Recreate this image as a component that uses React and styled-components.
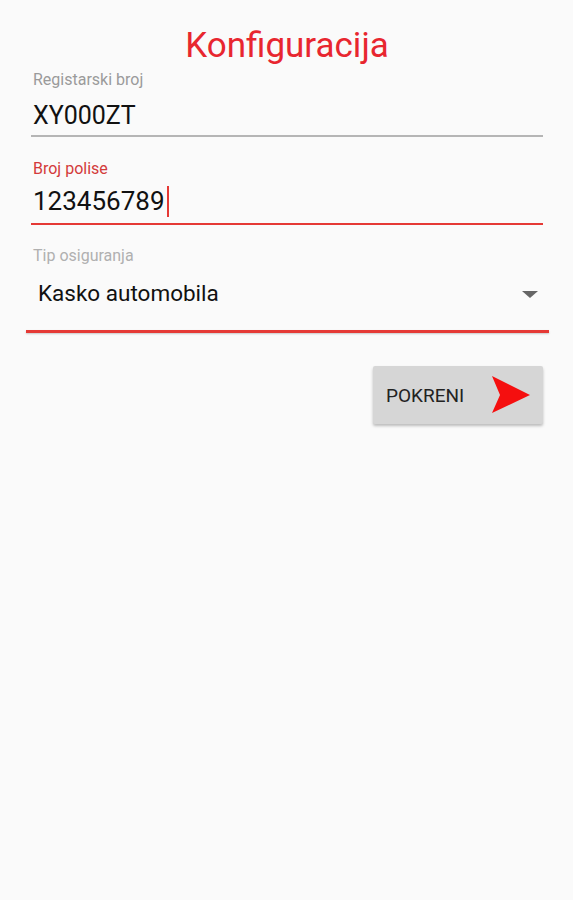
import React from 'react';
import styled, { createGlobalStyle } from 'styled-components';

const GlobalStyle = createGlobalStyle`
  html, body {
    margin: 0;
    padding: 0;
    background: #fafafa;
  }
  body {
    font-family: Roboto, "Noto Sans", sans-serif;
  }
`;

const Page = styled.div`
  width: 573px;
  min-height: 900px;
  background: #fafafa;
  box-sizing: border-box;
  padding: 26px 30px 0 31px;
  display: flex;
  flex-direction: column;
`;

const Title = styled.h1`
  margin: 0;
  text-align: center;
  color: #e8262f;
  font-weight: 400;
  font-size: 35px;
  line-height: 40px;
`;

const Field = styled.div`
  display: flex;
  flex-direction: column;
  margin-top: ${({ top }) => top}px;
`;

const Label = styled.div`
  font-size: 16px;
  line-height: 20px;
  padding-left: 2px;
  color: ${({ color }) => color};
`;

const Value = styled.div`
  font-size: ${({ size }) => size}px;
  line-height: ${({ size }) => size + 5}px;
  color: #111;
  padding-left: 2px;
  margin-top: ${({ gap }) => gap}px;
  display: flex;
  align-items: center;
`;

const Cursor = styled.span`
  display: inline-block;
  width: 2px;
  height: 31px;
  background: #e53935;
  margin-left: 2px;
`;

const Line = styled.div`
  height: 2px;
  background: ${({ color }) => color};
  margin-top: ${({ gap }) => gap}px;
`;

const SelectRow = styled.div`
  display: flex;
  align-items: center;
  justify-content: space-between;
  margin-top: 13px;
  padding: 0 5px 0 7px;
`;

const SelectText = styled.div`
  font-size: 22.5px;
  line-height: 28px;
  color: #111;
`;

const Caret = styled.div`
  width: 0;
  height: 0;
  margin-top: 2px;
  border-left: 8px solid transparent;
  border-right: 8px solid transparent;
  border-top: 7px solid #666;
`;

const SelectLine = styled.div`
  height: 3px;
  background: #e53935;
  margin: 23px -6px 0 -5px;
  box-shadow: 0 1px 2px rgba(0, 0, 0, 0.2);
`;

const Actions = styled.div`
  display: flex;
  justify-content: flex-end;
  margin-top: 33px;
`;

const RunButton = styled.button`
  width: 170px;
  height: 58px;
  border: none;
  border-radius: 2px;
  background: #d6d6d6;
  box-shadow: 0 2px 3px rgba(0, 0, 0, 0.25);
  display: flex;
  align-items: center;
  justify-content: space-between;
  padding: 0 12px 0 13px;
  font-family: Roboto, "Noto Sans", sans-serif;
  font-size: 19px;
  color: #222;
  cursor: pointer;
`;

const ArrowIcon = () => (
  <svg width="40" height="40" viewBox="0 0 40 40">
    <polygon points="1,1 39,20 1,38 9,20" fill="#f50f0f" />
  </svg>
);

export default function App() {
  return (
    <>
      <GlobalStyle />
      <Page>
        <Title>Konfiguracija</Title>
        <Field top={4}>
          <Label color="#9a9a9a">Registarski broj</Label>
          <Value size={25} gap={11}>XY000ZT</Value>
          <Line color="#b5b5b5" gap={4} />
        </Field>
        <Field top={22}>
          <Label color="#d33b3b">Broj polise</Label>
          <Value size={26} gap={7}>
            123456789
            <Cursor />
          </Value>
          <Line color="#e53935" gap={6} />
        </Field>
        <Field top={21}>
          <Label color="#b0b0b0">Tip osiguranja</Label>
          <SelectRow>
            <SelectText>Kasko automobila</SelectText>
            <Caret />
          </SelectRow>
          <SelectLine />
        </Field>
        <Actions>
          <RunButton>
            POKRENI
            <ArrowIcon />
          </RunButton>
        </Actions>
      </Page>
    </>
  );
}
